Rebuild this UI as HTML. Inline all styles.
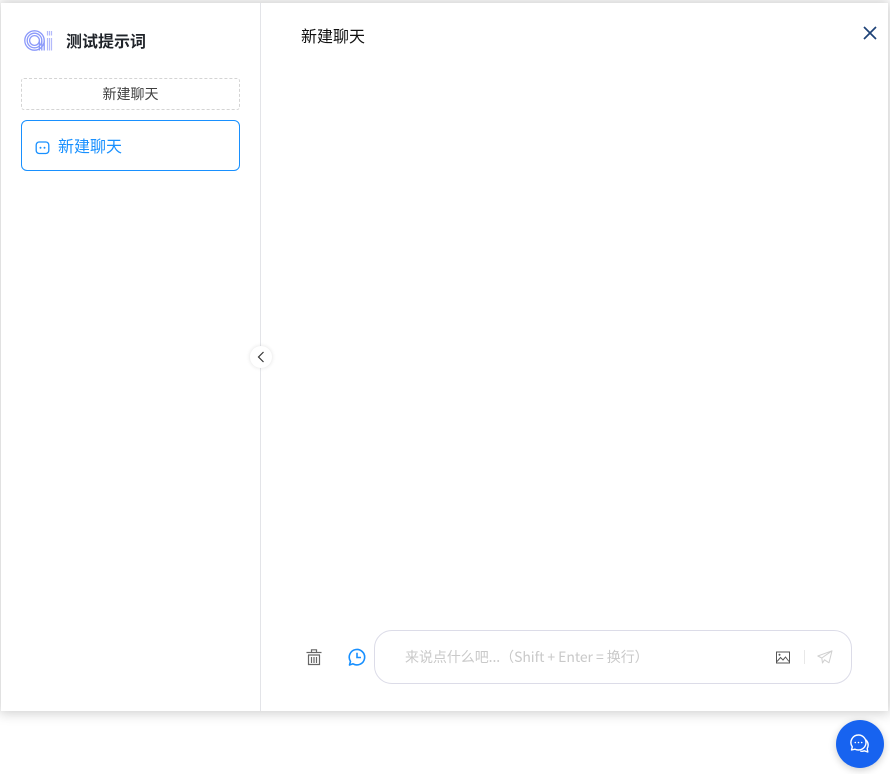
<!DOCTYPE html>
<html lang="zh">
<head>
<meta charset="utf-8">
<style>
html,body{margin:0;padding:0;width:890px;height:774px;overflow:hidden;background:#fff;font-family:"Liberation Sans","Noto Sans CJK SC",sans-serif;}
*{box-sizing:border-box;}
.abs{position:absolute;}
#panel{position:absolute;left:1px;top:3px;width:887px;height:708px;background:#fff;box-shadow:0 0 12px 2px rgba(0,0,0,.2);}
#divider{position:absolute;left:260px;top:3px;width:1px;height:708px;background:#e3e4e8;}
.title{left:66px;top:32px;font-size:16px;line-height:22px;font-weight:700;color:#1f2329;white-space:nowrap;}
.newbtn{left:21px;top:78px;width:219px;height:32px;border:1px dashed #d4d4d4;border-radius:3px;text-align:center;font-size:14px;line-height:30px;color:#3f3f3f;}
.item{left:21px;top:120px;width:219px;height:51px;border:1px solid #1890ff;border-radius:6px;}
.itemtext{left:58px;top:136px;font-size:16px;line-height:23px;color:#1890ff;white-space:nowrap;}
.head{left:301px;top:27px;font-size:16px;line-height:22px;color:#111;white-space:nowrap;}
.toggle{left:250px;top:346px;width:22px;height:22px;border-radius:50%;background:#fff;box-shadow:0 0 4px rgba(0,0,0,.12);}
.input{left:374px;top:630px;width:478px;height:54px;border:1px solid #dcdce8;border-radius:18px;background:#fff;}
.ph{left:405px;top:647px;font-family:"Noto Sans CJK SC",sans-serif;font-size:14px;line-height:20px;color:#c9c9c9;white-space:nowrap;letter-spacing:-.06px;}
.sep{left:804px;top:650px;width:1px;height:14px;background:#e8e8e8;}
.fab{left:836px;top:720px;width:48px;height:48px;border-radius:50%;background:#1763f0;box-shadow:0 2px 8px rgba(0,0,0,.2);}
svg{position:absolute;display:block;}
</style>
</head>
<body>
<div id="panel"></div>
<div id="divider"></div>

<svg class="abs" style="left:24px;top:29px" width="30" height="23" viewBox="0 0 30 23" fill="none" stroke="#8b99fa" stroke-width="1.300">
<circle cx="10.500" cy="11.500" r="9.700"/>
<circle cx="10.500" cy="11.500" r="7.300"/>
<circle cx="10.500" cy="11.500" r="4.900"/>
<path d="M20.200 11.500V21.500M17.800 11.500V21.500M15.400 11.500V21.500"/>
<path d="M23.500 9v12.500M25.500 9v12.500M27.500 9v12.500M23.500 2v4.500M25.500 2v4.500M27.500 2v4.500" stroke="#b3bafb" stroke-width="1.200"/>
</svg>
<div class="abs title">测试提示词</div>
<div class="abs newbtn">新建聊天</div>
<div class="abs item"></div>
<svg class="abs" style="left:35px;top:140px" width="15" height="15" viewBox="0 0 15 15" fill="none">
<rect x="1.200" y="2" width="12.600" height="11.500" rx="3" stroke="#1890ff" stroke-width="1.300"/>
<circle cx="5.500" cy="7.700" r="1" fill="#1890ff"/>
<circle cx="9.500" cy="7.700" r="1" fill="#1890ff"/>
</svg>
<div class="abs itemtext">新建聊天</div>

<div class="abs head">新建聊天</div>
<svg class="abs" style="left:862px;top:25px" width="16" height="16" viewBox="0 0 16 16" fill="none">
<path d="M2 2l12 12M14 2L2 14" stroke="#1d4277" stroke-width="1.700"/>
</svg>

<div class="abs toggle"></div>
<svg class="abs" style="left:256px;top:351px" width="10" height="12" viewBox="0 0 10 12" fill="none">
<path d="M7.500 1L2.500 6l5 5" stroke="#333" stroke-width="1.200"/>
</svg>

<svg class="abs" style="left:305px;top:648px" width="18" height="18" viewBox="0 0 18 18" fill="none" stroke="#666" stroke-width="1.200">
<path d="M1.500 4.500h15"/>
<path d="M6.500 4V1.800h5V4"/>
<path d="M3 7h12M3.500 7v9.500h11V7"/>
<path d="M6.500 9v6M9 9v6M11.500 9v6"/>
</svg>
<svg class="abs" style="left:348px;top:648px" width="18" height="18" viewBox="0 0 18 18" fill="none">
<path d="M1.500 17l1-3.600A7.700 7.700 0 1 1 5 15.800z" stroke="#1890ff" stroke-width="1.600" stroke-linejoin="round"/>
<path d="M9 4.800V9.500h4" stroke="#1890ff" stroke-width="1.600"/>
</svg>

<div class="abs input"></div>
<div class="abs ph">来说点什么吧...（Shift + Enter = 换行）</div>
<svg class="abs" style="left:776px;top:651px" width="14" height="13" viewBox="0 0 14 13" fill="none">
<rect x=".5" y="1" width="13" height="11" stroke="#555" stroke-width="1"/>
<path d="M1 10.500l3.500-4 2.500 2.500 2.500-3 3.500 4.500" stroke="#555" stroke-width="1"/>
<circle cx="3.500" cy="3.700" r="1" fill="#555"/>
</svg>
<div class="abs sep"></div>
<svg class="abs" style="left:817px;top:650px" width="16" height="14" viewBox="0 0 16 14" fill="none" stroke="#d0d0d0" stroke-width="1" stroke-linejoin="round">
<path d="M15 .8L.8 6l4 2L15 .8l-3 12-4.500-3L5.500 13l-.700-5"/>
</svg>

<div class="abs fab"></div>
<svg class="abs" style="left:849px;top:733px" width="22" height="22" viewBox="0 0 22 22" fill="none" stroke="#fff" stroke-width="1.400" stroke-linejoin="round">
<path d="M9.500 2a7.500 7.500 0 0 1 0 15c-1.300 0-2.500-.3-3.500-.8L2.500 17l.8-3.200A7.500 7.500 0 0 1 9.500 2z"/>
<path d="M16.500 6.500a7 7 0 0 1 1.700 9l.6 3.500-3.500-1.200c-1.300.6-2.700.7-4 .2"/>
<circle cx="6.300" cy="9.500" r=".8" fill="#fff" stroke="none"/>
<circle cx="9.500" cy="9.500" r=".8" fill="#fff" stroke="none"/>
<circle cx="12.700" cy="9.500" r=".8" fill="#fff" stroke="none"/>
</svg>
</body>
</html>
